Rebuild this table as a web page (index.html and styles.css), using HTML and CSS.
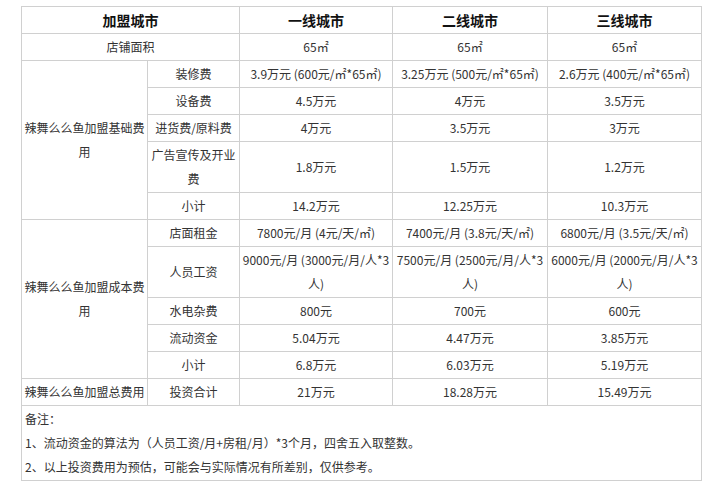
FILE: index.html
```html
<!DOCTYPE html>
<html lang="zh-CN">
<head>
<meta charset="utf-8">
<title>辣舞么么鱼加盟费用</title>
<link rel="stylesheet" href="styles.css">
</head>
<body>
<table class="fee">
  <colgroup>
    <col class="c0"><col class="c1"><col class="c2"><col class="c3"><col class="c4">
  </colgroup>
  <tr class="head"><th colspan="2">加盟城市</th><th>一线城市</th><th>二线城市</th><th>三线城市</th></tr>
  <tr><td colspan="2">店铺面积</td><td>65㎡</td><td>65㎡</td><td>65㎡</td></tr>
  <tr><td rowspan="5">辣舞么么鱼加盟基础费用</td><td>装修费</td><td>3.9万元 (600元/㎡*65㎡)</td><td>3.25万元 (500元/㎡*65㎡)</td><td>2.6万元 (400元/㎡*65㎡)</td></tr>
  <tr><td>设备费</td><td>4.5万元</td><td>4万元</td><td>3.5万元</td></tr>
  <tr><td>进货费/原料费</td><td>4万元</td><td>3.5万元</td><td>3万元</td></tr>
  <tr><td>广告宣传及开业<br>费</td><td>1.8万元</td><td>1.5万元</td><td>1.2万元</td></tr>
  <tr><td>小计</td><td>14.2万元</td><td>12.25万元</td><td>10.3万元</td></tr>
  <tr><td rowspan="5">辣舞么么鱼加盟成本费用</td><td>店面租金</td><td>7800元/月 (4元/天/㎡)</td><td>7400元/月 (3.8元/天/㎡)</td><td>6800元/月 (3.5元/天/㎡)</td></tr>
  <tr><td>人员工资</td><td>9000元/月 (3000元/月/人*3<br>人)</td><td>7500元/月 (2500元/月/人*3<br>人)</td><td>6000元/月 (2000元/月/人*3<br>人)</td></tr>
  <tr><td>水电杂费</td><td>800元</td><td>700元</td><td>600元</td></tr>
  <tr><td>流动资金</td><td>5.04万元</td><td>4.47万元</td><td>3.85万元</td></tr>
  <tr><td>小计</td><td>6.8万元</td><td>6.03万元</td><td>5.19万元</td></tr>
  <tr><td>辣舞么么鱼加盟总费用</td><td>投资合计</td><td>21万元</td><td>18.28万元</td><td>15.49万元</td></tr>
  <tr><td colspan="5" class="note">备注：<br>1、流动资金的算法为（人员工资/月+房租/月）*3个月，四舍五入取整数。<br>2、以上投资费用为预估，可能会与实际情况有所差别，仅供参考。</td></tr>
</table>
</body>
</html>
```
FILE: styles.css
```css
html, body {
  margin: 0;
  padding: 0;
  background: #fff;
}
body {
  padding: 6px 0 0 21px;
  font-family: "Noto Sans CJK SC", "Noto Sans", sans-serif;
  font-size: 12px;
  color: #333;
}
.fee {
  border-collapse: collapse;
  table-layout: fixed;
  width: 680px;
}
.c0 { width: 126px; }
.c1 { width: 92px; }
.c2 { width: 153px; }
.c3 { width: 155px; }
.c4 { width: 154px; }
.fee th,
.fee td {
  border: 1px solid #d0d0d0;
  padding: 1px 0;
  line-height: 24px;
  text-align: center;
  vertical-align: middle;
  white-space: nowrap;
  overflow: visible;
}
.fee td[rowspan] {
  white-space: normal;
  padding: 1px 2px;
}
.head th {
  font-size: 14px;
  font-weight: bold;
  color: #111;
}
.fee td.note {
  text-align: left;
  padding: 1px 3px;
}
```
